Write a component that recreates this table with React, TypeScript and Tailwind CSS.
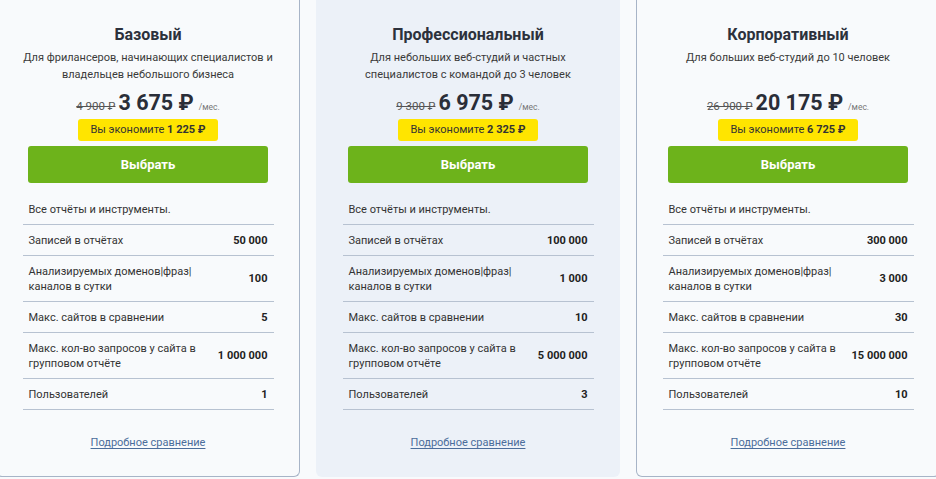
import React from "react";

type Row = { label: string; value: string };

type Plan = {
  title: string;
  desc: string;
  oldPrice: string;
  price: string;
  save: string;
  rows: Row[];
  featured?: boolean;
};

const plans: Plan[] = [
  {
    title: "Базовый",
    desc: "Для фрилансеров, начинающих специалистов и владельцев небольшого бизнеса",
    oldPrice: "4 900 ₽",
    price: "3 675 ₽",
    save: "1 225 ₽",
    rows: [
      { label: "Записей в отчётах", value: "50 000" },
      { label: "Анализируемых доменов|фраз| каналов в сутки", value: "100" },
      { label: "Макс. сайтов в сравнении", value: "5" },
      { label: "Макс. кол-во запросов у сайта в групповом отчёте", value: "1 000 000" },
      { label: "Пользователей", value: "1" },
    ],
  },
  {
    title: "Профессиональный",
    desc: "Для небольших веб-студий и частных специалистов с командой до 3 человек",
    oldPrice: "9 300 ₽",
    price: "6 975 ₽",
    save: "2 325 ₽",
    featured: true,
    rows: [
      { label: "Записей в отчётах", value: "100 000" },
      { label: "Анализируемых доменов|фраз| каналов в сутки", value: "1 000" },
      { label: "Макс. сайтов в сравнении", value: "10" },
      { label: "Макс. кол-во запросов у сайта в групповом отчёте", value: "5 000 000" },
      { label: "Пользователей", value: "3" },
    ],
  },
  {
    title: "Корпоративный",
    desc: "Для больших веб-студий до 10 человек",
    oldPrice: "26 900 ₽",
    price: "20 175 ₽",
    save: "6 725 ₽",
    rows: [
      { label: "Записей в отчётах", value: "300 000" },
      { label: "Анализируемых доменов|фраз| каналов в сутки", value: "3 000" },
      { label: "Макс. сайтов в сравнении", value: "30" },
      { label: "Макс. кол-во запросов у сайта в групповом отчёте", value: "15 000 000" },
      { label: "Пользователей", value: "10" },
    ],
  },
];

const PlanCard: React.FC<{ plan: Plan }> = ({ plan }) => {
  return (
    <div
      className={
        plan.featured
          ? "w-[304px] shrink-0 h-[477px] rounded-b-md bg-[#ecf1f8] flex flex-col items-center pt-[23px]"
          : "w-[304px] shrink-0 h-[477px] rounded-b-md border border-t-0 border-[#a7b4c7] bg-[#f8fafc] flex flex-col items-center pt-[23px]"
      }
    >
      <h2 className="text-[16px] leading-[24px] font-bold text-[#2c313c]">{plan.title}</h2>
      <p className="mt-[2px] h-[34px] w-[262px] text-center text-[11px] leading-[17px] text-[#3a3a3a]">
        {plan.desc}
      </p>
      <div className="mt-[6px] flex items-baseline h-[28px]">
        <span className="text-[11.5px] text-[#555] line-through mr-[3px]">{plan.oldPrice}</span>
        <span className="text-[21.5px] leading-[28px] font-bold text-[#2a2e38]">{plan.price}</span>
        <span className="text-[8.5px] text-[#777] ml-[5px]">/мес.</span>
      </div>
      <div className="mt-[2px] h-[22px] px-[12px] rounded-[3px] bg-[#ffe500] flex items-center text-[11px] text-[#333]">
        Вы экономите&nbsp;<b className="font-bold">{plan.save}</b>
      </div>
      <button className="mt-[5px] w-[240px] h-[37px] rounded-[3px] bg-[#6db31b] text-white text-[13px] font-bold">
        Выбрать
      </button>
      <div className="mt-[10px] w-[251px] text-[11px] leading-[15px] text-[#333]">
        <div className="px-[6px] pt-[9px] pb-[7px] border-b border-[#b7c2d1]">
          Все отчёты и инструменты.
        </div>
        {plan.rows.map((r) => (
          <div
            key={r.label}
            className="flex items-center justify-between gap-2 px-[6px] py-[7.5px] border-b border-[#b7c2d1]"
          >
            <span className="max-w-[172px]">{r.label}</span>
            <span className="font-bold text-[#222] whitespace-nowrap">{r.value}</span>
          </div>
        ))}
      </div>
      <a href="#" className="mt-[25px] text-[11px] text-[#4b6d9b] underline underline-offset-2">
        Подробное сравнение
      </a>
    </div>
  );
};

export default function App() {
  return (
    <div
      className="w-[936px] h-[479px] overflow-hidden bg-[#f8fafc] flex justify-center gap-4"
      style={{ fontFamily: "Roboto, 'Liberation Sans', sans-serif" }}
    >
      {plans.map((p) => (
        <PlanCard key={p.title} plan={p} />
      ))}
    </div>
  );
}
